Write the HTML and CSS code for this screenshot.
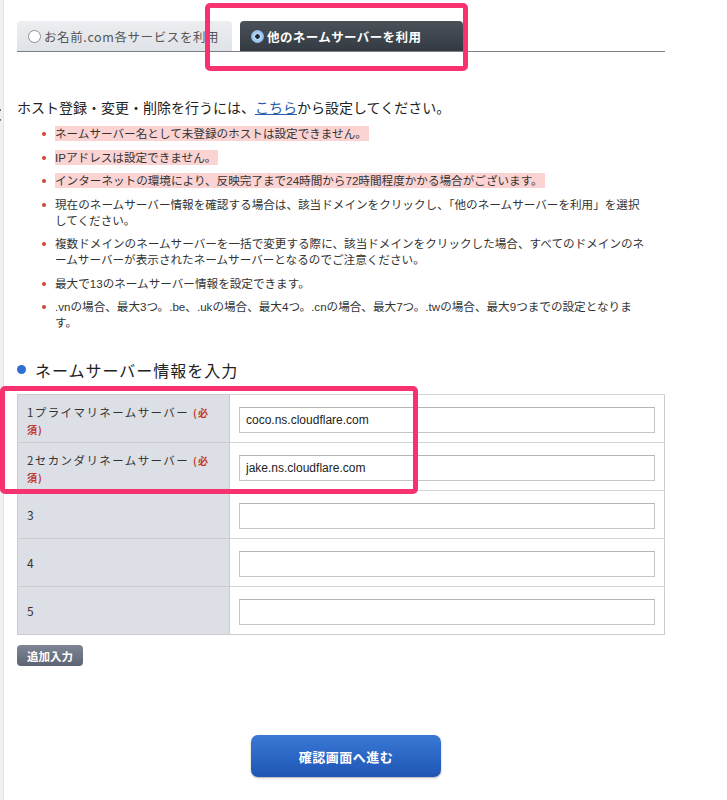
FILE: index.html
```html
<!DOCTYPE html>
<html lang="ja">
<head>
    <meta charset="UTF-8">
    <meta name="viewport" content="width=device-width, initial-scale=1.0">
    <title>ネームサーバー設定</title>
    <link rel="stylesheet" href="styles.css">
</head>
<body>
    <div class="page">
        <div class="side-strip">
            <span class="strip-mark"></span>
        </div>

        <div class="main">
            <!-- タブ -->
            <div class="tabs">
                <div class="tab">
                    <span class="radio"></span>お名前.com各サービスを利用
                </div>
                <div class="tab active">
                    <span class="radio checked"></span>他のネームサーバーを利用
                </div>
            </div>

            <p class="intro">ホスト登録・変更・削除を行うには、<a href="#">こちら</a>から設定してください。</p>

            <ul class="notes">
                <li><span class="mark">ネームサーバー名として未登録のホストは設定できません。</span></li>
                <li><span class="mark">IPアドレスは設定できません。</span></li>
                <li><span class="mark">インターネットの環境により、反映完了まで24時間から72時間程度かかる場合がございます。</span></li>
                <li>現在のネームサーバー情報を確認する場合は、該当ドメインをクリックし、「他のネームサーバーを利用」を選択<br>してください。</li>
                <li>複数ドメインのネームサーバーを一括で変更する際に、該当ドメインをクリックした場合、すべてのドメインのネ<br>ームサーバーが表示されたネームサーバーとなるのでご注意ください。</li>
                <li>最大で13のネームサーバー情報を設定できます。</li>
                <li>.vnの場合、最大3つ。.be、.ukの場合、最大4つ。.cnの場合、最大7つ。.twの場合、最大9つまでの設定となりま<br>す。</li>
            </ul>

            <h2 class="section-title">ネームサーバー情報を入力</h2>

            <table class="ns-table">
                <tr>
                    <th>1プライマリネームサーバー <span class="req">(必須)</span></th>
                    <td><input type="text" value="coco.ns.cloudflare.com"></td>
                </tr>
                <tr>
                    <th>2セカンダリネームサーバー <span class="req">(必須)</span></th>
                    <td><input type="text" value="jake.ns.cloudflare.com"></td>
                </tr>
                <tr>
                    <th class="num">3</th>
                    <td><input type="text"></td>
                </tr>
                <tr>
                    <th class="num">4</th>
                    <td><input type="text"></td>
                </tr>
                <tr>
                    <th class="num">5</th>
                    <td><input type="text"></td>
                </tr>
            </table>

            <button class="add-btn">追加入力</button>

            <div class="submit-row">
                <button class="submit-btn">確認画面へ進む</button>
            </div>
        </div>
    </div>

    <!-- 赤枠（注釈） -->
    <div class="callout callout-tab"></div>
    <div class="callout callout-rows"></div>
</body>
</html>
```

FILE: styles.css
```css
* {
    box-sizing: border-box;
}

body {
    margin: 0;
    background: #fff;
    color: #333;
    font-family: "Noto Sans CJK JP", "Liberation Sans", sans-serif;
}

.page {
    display: flex;
    width: 727px;
    min-height: 800px;
}

.side-strip {
    width: 4px;
    background: #eef0f3;
    border-right: 1px solid #e2e5e9;
    overflow: hidden;
    padding-top: 110px;
}

.strip-mark {
    display: block;
    width: 10px;
    height: 10px;
    margin-left: -6px;
    border-left: 3px solid #333;
    border-bottom: 3px solid #333;
    transform: rotate(45deg);
}

.main {
    width: 661px;
    padding: 21px 0 0 13px;
}

/* タブ */
.tabs {
    display: flex;
    gap: 8px;
    border-bottom: 1px solid #7b7f85;
    height: 31px;
}

.tab {
    display: flex;
    align-items: center;
    height: 30px;
    padding: 0 12px 0 11px;
    width: 215px;
    border-radius: 4px 4px 0 0;
    background: linear-gradient(#eceef1, #dfe2e7);
    color: #555;
    font-size: 12.5px;
    letter-spacing: 0.6px;
}

.tab.active {
    width: 223px;
    background: linear-gradient(#4a5159, #343a41);
    color: #fff;
    font-weight: bold;
    letter-spacing: 0.4px;
}

.radio {
    width: 13px;
    height: 13px;
    margin-right: 3px;
    border-radius: 50%;
    border: 1px solid #8d9197;
    background: #fff;
    flex: none;
}

.radio.checked {
    border: none;
    background: radial-gradient(circle, #1f2a38 0 2px, #bcd9f5 2.5px, #8fbdea 6px);
}

.intro {
    margin: 45px 0 0;
    font-size: 14px;
    line-height: 20px;
    color: #222;
}

.intro a {
    color: #2a5caa;
    text-decoration: underline;
}

.notes {
    list-style: none;
    margin: 9px 0 0;
    padding: 0 10px 0 38px;
    font-family: "Liberation Sans", "Noto Sans CJK JP", sans-serif;
    font-size: 11.6px;
    line-height: 16px;
    color: #333;
}

.notes li {
    position: relative;
    margin-bottom: 7.5px;
}

.notes li::before {
    content: "";
    position: absolute;
    left: -13px;
    top: 6px;
    width: 4px;
    height: 4px;
    border-radius: 50%;
    background: #d0452e;
}

.mark {
    background: #fbd3d3;
    padding: 1px 2px 1px 0;
}

.section-title {
    margin: 28px 0 0;
    padding-left: 18px;
    position: relative;
    font-size: 16px;
    font-weight: normal;
    line-height: 22px;
    letter-spacing: 1px;
    color: #222;
}

.section-title::before {
    content: "";
    position: absolute;
    left: 0;
    top: 6px;
    width: 9px;
    height: 9px;
    border-radius: 50%;
    background: #2f6fd1;
}

/* 入力テーブル */
.ns-table {
    width: 648px;
    margin-top: 13px;
    border-collapse: collapse;
    border: 1px solid #c9cbcf;
}

.ns-table tr {
    height: 48px;
}

.ns-table th {
    width: 212px;
    padding: 4px 12px 0 9px;
    background: #dcdfe5;
    border-top: 1px solid #c9cbcf;
    border-right: 1px solid #c9cbcf;
    text-align: left;
    vertical-align: middle;
    font-size: 11.5px;
    font-weight: normal;
    line-height: 17px;
    letter-spacing: 1.4px;
    color: #333;
}

.ns-table th.num {
    font-size: 12px;
    padding-top: 0;
}

.req {
    color: #c0392b;
    font-size: 10px;
    font-weight: bold;
    letter-spacing: 1px;
}

.ns-table td {
    padding: 0 9px;
    border-top: 1px solid #d3d5d8;
}

.ns-table input {
    width: 100%;
    height: 26px;
    border: 1px solid #c6c6c6;
    border-top-color: #b5b5b5;
    padding: 0 6px;
    font-family: "Liberation Sans", Arial, sans-serif;
    font-size: 12px;
    color: #222;
    background: #fff;
}

.add-btn {
    display: block;
    margin-top: 10px;
    width: 66px;
    height: 21px;
    padding: 0;
    border: none;
    border-radius: 4px;
    background: linear-gradient(#7e8594, #5c6373);
    color: #fff;
    font-family: "Noto Sans CJK JP", sans-serif;
    font-size: 11.5px;
    font-weight: bold;
}

.submit-row {
    display: flex;
    justify-content: center;
    padding-top: 69px;
    width: 648px;
    margin-left: 5px;
}

.submit-btn {
    width: 190px;
    height: 42px;
    border: none;
    border-radius: 7px;
    background: linear-gradient(#3a79d6, #1e55b4);
    box-shadow: 0 1px 2px rgba(0, 0, 0, 0.3);
    color: #fff;
    font-family: "Noto Sans CJK JP", sans-serif;
    font-size: 13px;
    font-weight: bold;
    letter-spacing: 0.5px;
}

/* 赤枠 */
.callout {
    position: absolute;
    border: 5px solid #f8326e;
    border-radius: 5px;
}

.callout-tab {
    left: 205px;
    top: 3px;
    width: 263px;
    height: 68px;
}

.callout-rows {
    left: 0;
    top: 386px;
    width: 418px;
    height: 108px;
}
```
